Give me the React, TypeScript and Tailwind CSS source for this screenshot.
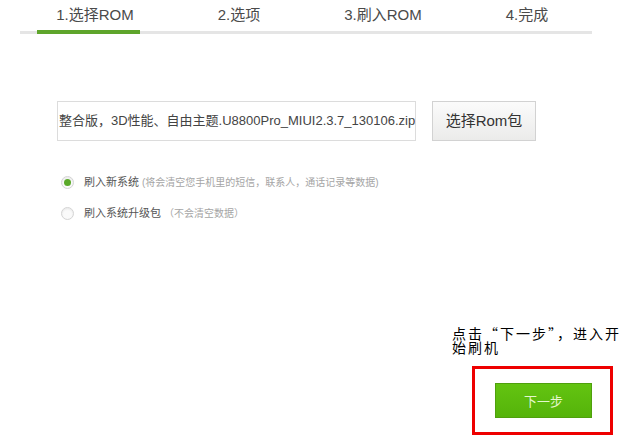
import React from "react";

const steps = ["1.选择ROM", "2.选项", "3.刷入ROM", "4.完成"];

const options = [
  { id: "new", label: "刷入新系统", note: "(将会清空您手机里的短信，联系人，通话记录等数据)", checked: true },
  { id: "update", label: "刷入系统升级包", note: "（不会清空数据）", checked: false },
];

const Radio = ({ checked }: { checked: boolean }) => (
  <span className="w-[13px] h-[13px] rounded-full border border-[#d4d4d4] bg-[#fafafa] flex items-center justify-center shadow-[inset_0_1px_2px_rgba(0,0,0,0.08)]">
    {checked && <span className="w-[7px] h-[7px] rounded-full bg-[#5aa929]" />}
  </span>
);

export default function App() {
  return (
    <div className="w-[637px] h-[442px] bg-white overflow-hidden [font-family:'Liberation_Sans','Noto_Sans_CJK_SC',sans-serif]">
      {/* step tabs */}
      <div className="flex pl-[23px] pt-[5px] h-[30px]">
        {steps.map((s) => (
          <div key={s} className="w-[144px] text-center text-[15px] leading-[20px] text-[#4a4a4a]">
            {s}
          </div>
        ))}
      </div>
      <div className="ml-[20px] w-[572px] h-[4px] flex">
        <div className="w-[17px] h-[3px] mt-[1px] bg-[#e5e5e5]" />
        <div className="w-[103px] h-[4px] bg-[#5ea52b]" />
        <div className="flex-1 h-[3px] mt-[1px] bg-[#e5e5e5]" />
      </div>

      {/* file picker */}
      <div className="flex mt-[67px] ml-[57px]">
        <div className="w-[359px] h-[40px] border border-[#dcdcdc] flex items-center overflow-hidden whitespace-nowrap">
          <span className="text-[13px] text-[#444] pl-[1px]">整合版，3D性能、自由主题.U8800Pro_MIUI2.3.7_130106.zip</span>
        </div>
        <button className="ml-[16px] w-[104px] h-[40px] border border-[#d2d2d2] bg-[linear-gradient(#fbfbfb,#ebebea)] text-[15px] text-[#333]">
          选择Rom包
        </button>
      </div>

      {/* options */}
      <div className="flex flex-col gap-[11px] mt-[31px] ml-[61px]">
        {options.map((o) => (
          <div key={o.id} className="flex items-center h-[20px]">
            <Radio checked={o.checked} />
            <span className="ml-[10px] text-[11px] text-[#555]">{o.label}</span>
            <span className="ml-[3px] text-[10px] text-[#a5a5a5]">{o.note}</span>
          </div>
        ))}
      </div>

      {/* annotation */}
      <div className="mt-[103px] ml-[452px] w-[172px] text-[14px] leading-[14px] text-black tracking-[2px] [font-family:'Noto_Sans_CJK_SC',sans-serif]">
        点击“下一步”，进入开始刷机
      </div>
      <div className="mt-[12px] ml-[472px] w-[141px] h-[69px] border-[3px] border-[#ee0000] pl-[20px] pt-[14px]">
        <button className="w-[97px] h-[35px] bg-[linear-gradient(#63c411,#55b30a)] border border-[#4fa00d] text-[13px] text-[#e4f7cc] [font-family:'Noto_Sans_CJK_SC',sans-serif]">
          下一步
        </button>
      </div>
    </div>
  );
}
